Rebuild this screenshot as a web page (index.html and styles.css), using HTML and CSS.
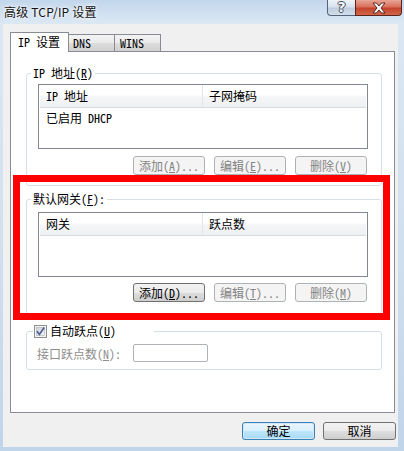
FILE: index.html
```html
<!DOCTYPE html>
<html lang="zh-CN">
<head>
    <meta charset="UTF-8">
    <meta name="viewport" content="width=device-width, initial-scale=1.0">
    <title>高级 TCP/IP 设置</title>
    <link rel="stylesheet" href="styles.css">
</head>
<body>
    <div class="window">
        <div class="titlebar">
            <span class="title">高级 TCP/IP 设置</span>
            <div class="caption-buttons">
                <span class="cap help">?</span>
                <span class="cap close">
                    <svg width="14" height="12" viewBox="-1 -1 14 12">
                        <path d="M0,0 H3.4 L6,3 L8.6,0 H12 L8,5 L12,10 H8.6 L6,7 L3.4,10 H0 L4,5 Z" fill="#f4f4f4" stroke="#4a1d17" stroke-width="0.9"/>
                    </svg>
                </span>
            </div>
        </div>

        <div class="client">
            <div class="tabs">
                <div class="tab active">IP 设置</div>
                <div class="tab tab-dns">DNS</div>
                <div class="tab tab-wins">WINS</div>
            </div>

            <div class="panel">
                <fieldset class="group group-ip">
                    <legend>IP 地址(<u>R</u>)</legend>
                    <div class="listview">
                        <div class="lv-header">
                            <span class="col col-first">IP 地址</span>
                            <span class="col">子网掩码</span>
                        </div>
                        <div class="lv-row">已启用 DHCP</div>
                    </div>
                    <div class="btn-row">
                        <button class="btn" disabled>添加(<u>A</u>)...</button>
                        <button class="btn" disabled>编辑(<u>E</u>)...</button>
                        <button class="btn" disabled>删除(<u>V</u>)</button>
                    </div>
                </fieldset>

                <fieldset class="group group-gw">
                    <legend>默认网关(<u>F</u>):</legend>
                    <div class="listview">
                        <div class="lv-header">
                            <span class="col col-first">网关</span>
                            <span class="col">跃点数</span>
                        </div>
                    </div>
                    <div class="btn-row">
                        <button class="btn">添加(<u>D</u>)...</button>
                        <button class="btn" disabled>编辑(<u>T</u>)...</button>
                        <button class="btn" disabled>删除(<u>M</u>)</button>
                    </div>
                </fieldset>

                <fieldset class="group group-metric">
                    <legend class="check-legend">
                        <svg class="checkbox" width="13" height="13" viewBox="0 0 13 13">
                            <defs>
                                <linearGradient id="cbfill" x1="0" y1="0" x2="1" y2="1">
                                    <stop offset="0" stop-color="#cbcfd5"/>
                                    <stop offset="1" stop-color="#f6f6f6"/>
                                </linearGradient>
                            </defs>
                            <rect x="0.5" y="0.5" width="12" height="12" fill="#f4f4f4" stroke="#8e8f8f"/>
                            <rect x="2.5" y="2.5" width="8" height="8" fill="url(#cbfill)" stroke="#aeb3b9" stroke-width="0.6"/>
                            <path d="M3,6.2 L5.4,9.4 L10.2,2.6" fill="none" stroke="#4d5f94" stroke-width="1.7"/>
                        </svg>
                        <span>自动跃点(<u>U</u>)</span>
                    </legend>
                    <div class="metric-row">
                        <label class="metric-label" for="metric">接口跃点数(<u>N</u>):</label>
                        <input id="metric" class="metric-input" type="text" disabled>
                    </div>
                </fieldset>
            </div>

            <div class="footer">
                <button class="btn btn-footer default">确定</button>
                <button class="btn btn-footer">取消</button>
            </div>
        </div>

        <div class="highlight"></div>
    </div>
</body>
</html>
```

FILE: styles.css
```css
* {
    box-sizing: border-box;
}
body {
    margin: 0;
    font-family: "Noto Sans Mono CJK SC", "Noto Sans CJK SC", sans-serif;
    font-size: 12px;
    color: #000;
}
.window {
    position: relative;
    width: 404px;
    height: 451px;
    display: flex;
    flex-direction: column;
    background: linear-gradient(180deg, #c2d6ec 0%, #dbe7f3 22px, #cfdeee 60%, #c0d4ea 100%);
}
.titlebar {
    height: 24px;
    display: flex;
    justify-content: space-between;
    align-items: flex-start;
}
.title {
    font-family: "Noto Sans CJK SC", sans-serif;
    font-size: 12px;
    line-height: 14px;
    padding: 5px 0 0 4px;
    color: #111;
    letter-spacing: 0.2px;
    text-shadow: 0 0 5px #fff, 0 0 3px #fff;
}
.caption-buttons {
    display: flex;
    margin-right: 2px;
}
.cap {
    height: 16px;
    display: flex;
    align-items: center;
    justify-content: center;
    border: 1px solid #56657a;
    border-top: none;
}
.help {
    width: 28px;
    border-right: none;
    border-radius: 0 0 0 4px;
    background: linear-gradient(180deg, #eef3f9 0%, #d8e2ee 45%, #bfcddf 55%, #d3deea 100%);
    color: #f8f8f8;
    font-family: "DejaVu Sans", sans-serif;
    font-weight: bold;
    font-size: 14px;
    line-height: 15px;
    text-shadow: 1px 0 0 #3f4b5c, -1px 0 0 #3f4b5c, 0 1px 0 #3f4b5c, 0 -1px 0 #3f4b5c;
}
.close {
    width: 47px;
    border-color: #5b231c;
    border-radius: 0 0 4px 0;
    background: linear-gradient(180deg, #e8a595 0%, #d9705c 45%, #c4442c 55%, #d0674a 100%);
}
.client {
    flex: 1;
    margin: 0 6px 4px 3px;
    padding: 8px 3px 7px 7px;
    background: #f0f0f0;
    display: flex;
    flex-direction: column;
}
.tabs {
    height: 19px;
    display: flex;
    align-items: flex-end;
    position: relative;
    z-index: 1;
}
.tab {
    height: 17px;
    width: 47px;
    margin-left: -1px;
    padding-left: 4px;
    border: 1px solid #898c95;
    border-bottom: none;
    background: linear-gradient(180deg, #f3f3f3 0%, #ebebeb 50%, #dddddd 50%, #d0d0d0 100%);
    line-height: 16px;
}
.tab.active {
    height: 20px;
    width: 59px;
    margin-left: 0;
    margin-bottom: -1px;
    padding-left: 7px;
    background: #fff;
    line-height: 18px;
}
.tab-wins {
    padding-left: 5px;
}
.panel {
    flex: 1;
    border: 1px solid #898c95;
    background: #fff;
    padding: 0 12px 0 15px;
    display: flex;
    flex-direction: column;
}
.group {
    margin: 0;
    min-width: 0;
    border: 1px solid #d5dfe5;
    border-radius: 3px;
    padding: 4px 13px 10px 11px;
}
.group legend {
    padding: 0 2px;
    margin-left: -7px;
    line-height: 14px;
}
.group-ip {
    margin-top: 14px;
}
.group-gw {
    margin-top: 6px;
    padding-top: 6px;
    padding-bottom: 11px;
}
.group-metric {
    margin-top: 10px;
    padding-top: 6px;
    padding-bottom: 7px;
}
.check-legend {
    width: 121px;
    display: flex;
    align-items: center;
}
.group .check-legend {
    margin-left: -5px;
    padding: 0 1px;
}
.checkbox {
    margin-right: 3px;
    flex-shrink: 0;
}
.listview {
    height: 65px;
    border: 1px solid #828790;
    background: #fff;
    padding: 0 1px;
    margin-bottom: 7px;
}
.group-gw .listview {
    margin-bottom: 6px;
}
.lv-header {
    height: 23px;
    display: flex;
    background: linear-gradient(180deg, #ffffff 0%, #ffffff 45%, #f4f5f7 55%, #eef0f2 100%);
    border-bottom: 1px solid #d6dadf;
}
.col {
    padding-left: 6px;
    line-height: 22px;
}
.col-first {
    width: 163px;
    border-right: 1px solid #e2e5e9;
}
.lv-row {
    padding-left: 6px;
    line-height: 20px;
}
.btn-row {
    display: flex;
    justify-content: flex-end;
    gap: 9px;
    margin-right: 1px;
}
.btn {
    width: 72px;
    height: 19px;
    padding: 0;
    font: inherit;
    line-height: 16px;
    color: #000;
    border: 1px solid #707070;
    border-radius: 3px;
    background: linear-gradient(180deg, #f2f2f2 0%, #ebebeb 50%, #dddddd 50%, #cfcfcf 100%);
}
.btn:disabled {
    color: #838383;
    border-color: #adb2b5;
    background: #f4f4f4;
}
.metric-row {
    display: flex;
    align-items: center;
}
.metric-label {
    width: 96px;
    margin-left: -1px;
    color: #8d8d8d;
}
.metric-input {
    width: 75px;
    height: 18px;
    border: 1px solid #afb3b7;
    border-radius: 2px;
    background: #fff;
}
.footer {
    display: flex;
    justify-content: flex-end;
    gap: 8px;
    margin-top: 9px;
    margin-right: -1px;
}
.btn-footer {
    width: 73px;
    height: 18px;
}
.btn.default {
    border-color: #3c7fb1;
    background: linear-gradient(180deg, #eaf6fd 0%, #d9f0fc 50%, #bee6fd 50%, #a7d9f5 100%);
    box-shadow: inset 0 0 0 1px #cfeafb;
}
.highlight {
    position: absolute;
    left: 13px;
    top: 175px;
    width: 377px;
    height: 145px;
    border: 7px solid #ff0000;
    pointer-events: none;
}
```
